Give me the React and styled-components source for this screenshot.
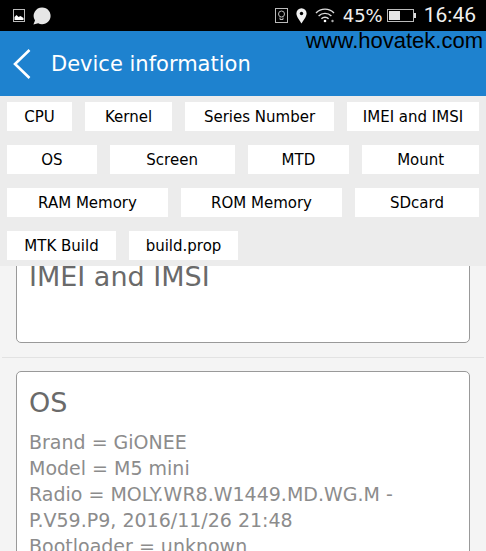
import React from "react";
import styled, { createGlobalStyle } from "styled-components";

const SECTION_ROWS = [
  {
    columns: "65fr 87fr 149fr 132fr",
    items: ["CPU", "Kernel", "Series Number", "IMEI and IMSI"],
  },
  {
    columns: "90fr 125fr 102fr 117fr",
    items: ["OS", "Screen", "MTD", "Mount"],
  },
  {
    columns: "161fr 161fr 124fr",
    items: ["RAM Memory", "ROM Memory", "SDcard"],
  },
  {
    columns: "109fr 109fr 228fr",
    items: ["MTK Build", "build.prop"],
  },
];

const OS_DETAILS = [
  "Brand = GiONEE",
  "Model = M5 mini",
  "Radio = MOLY.WR8.W1449.MD.WG.M - P.V59.P9, 2016/11/26 21:48",
  "Bootloader = unknown",
];

const App = () => {
  return (
    <>
      <GlobalStyle />
      <Screen>
        <StatusBar />
        <TitleBar>
          <BackButton type="button" aria-label="Back">
            <svg width="18" height="32" viewBox="0 0 18 32" fill="none">
              <path d="M16.5 2 L2 16 L16.5 30" stroke="#fff" strokeWidth="2.6" />
            </svg>
          </BackButton>
          <Title>Device information</Title>
          <SiteMark>www.hovatek.com</SiteMark>
        </TitleBar>
        <Sections>
          {SECTION_ROWS.map((row) => (
            <SectionRow key={row.columns} $columns={row.columns}>
              {row.items.map((item) => (
                <SectionButton key={item} type="button">
                  {item}
                </SectionButton>
              ))}
            </SectionRow>
          ))}
        </Sections>
        <Content>
          <CardList>
            <Card>
              <CardTitle>IMEI and IMSI</CardTitle>
            </Card>
            <Divider />
            <Card>
              <CardTitle>OS</CardTitle>
              {OS_DETAILS.map((line) => (
                <Detail key={line}>{line}</Detail>
              ))}
            </Card>
          </CardList>
        </Content>
      </Screen>
    </>
  );
};

const StatusBar = () => {
  return (
    <StatusWrapper>
      <StatusGroup>
        <svg width="12" height="13" viewBox="0 0 12 13">
          <rect x="0.5" y="0.5" width="11" height="12" fill="none" stroke="#bbb" />
          <path d="M1.5 11V8l2-2 2 2 2-1 3 2v2z" fill="#fff" />
        </svg>
        <svg width="18" height="18" viewBox="0 0 18 18">
          <path
            d="M9.2 0.5a8.4 8.4 0 1 1-4 15.8L0.4 17.6 2 13.4A8.4 8.4 0 0 1 9.2 0.5z"
            fill="#e6e6e6"
          />
        </svg>
      </StatusGroup>
      <StatusGroup>
        <svg width="13" height="15" viewBox="0 0 13 15" fill="none" stroke="#bbb">
          <rect x="0.5" y="0.5" width="12" height="14" />
          <circle cx="6.5" cy="6" r="3" />
          <path d="M5 9.5v2h3v-2" />
        </svg>
        <svg width="11" height="16" viewBox="0 0 11 16">
          <path
            d="M5.5 0.3a5.1 5.1 0 0 1 5.1 5.2c0 3.5-3.6 7-5.1 10.1C4 12.5 0.4 9 0.4 5.5A5.1 5.1 0 0 1 5.5 0.3z"
            fill="#f2f2f2"
          />
          <circle cx="5.5" cy="5.5" r="1.7" fill="#000" />
        </svg>
        <svg width="20" height="15" viewBox="0 0 20 15" fill="none" stroke="#ddd">
          <path d="M1 5a12.5 12.5 0 0 1 18 0" strokeWidth="1.4" />
          <path d="M3.6 8a9 9 0 0 1 12.8 0" strokeWidth="1.4" />
          <path d="M6.4 10.8a5 5 0 0 1 7.2 0" strokeWidth="1.4" />
          <circle cx="10" cy="13" r="1.3" fill="#fff" stroke="none" />
          <circle cx="17.5" cy="13" r="1.2" fill="#aaa" stroke="none" />
        </svg>
        <Battery>
          <Percent>45%</Percent>
          <svg width="29" height="13" viewBox="0 0 29 13">
            <rect x="0.5" y="0.5" width="26" height="12" fill="none" stroke="#bbb" />
            <rect x="2" y="2" width="11" height="9" fill="#e6e6e6" />
            <rect x="27" y="4" width="2" height="5" fill="#ddd" />
          </svg>
        </Battery>
        <Clock>16:46</Clock>
      </StatusGroup>
    </StatusWrapper>
  );
};

const GlobalStyle = createGlobalStyle`
  *, *::before, *::after {
    box-sizing: border-box;
  }

  body {
    margin: 0;
    font-family: "DejaVu Sans", sans-serif;
  }

  svg {
    display: block;
    flex: none;
  }
`;

const Screen = styled.div`
  display: flex;
  flex-direction: column;
  height: 100vh;
  background: #f4f4f4;
`;

const StatusWrapper = styled.div`
  display: flex;
  justify-content: space-between;
  flex: none;
  height: 31px;
  padding: 0 10px 0 13px;
  background: #000;
  color: #f0f0f0;
`;

const StatusGroup = styled.div`
  display: flex;
  align-items: center;
  gap: 8px;
`;

const Battery = styled.div`
  display: flex;
  align-items: center;
  gap: 4px;
`;

const Percent = styled.span`
  font-size: 18px;
`;

const Clock = styled.time`
  font: 400 21px/31px Roboto, sans-serif;
`;

const TitleBar = styled.header`
  position: relative;
  display: flex;
  align-items: center;
  flex: none;
  gap: 20px;
  height: 65px;
  padding: 0 13px;
  background: #1e82cf;
`;

const BackButton = styled.button`
  padding: 0;
  border: 0;
  background: none;
  cursor: pointer;
`;

const Title = styled.h1`
  margin: 0;
  font-size: 21px;
  font-weight: 400;
  color: #fff;
  white-space: nowrap;
`;

const SiteMark = styled.span`
  position: absolute;
  top: 0;
  right: 3px;
  font: 400 22px/20px "Liberation Sans", Arial, sans-serif;
  color: #000;
`;

const Sections = styled.nav`
  display: grid;
  flex: none;
  gap: 14px;
  padding: 6px 7px;
  background: #ececec;
`;

const SectionRow = styled.div`
  display: grid;
  grid-template-columns: ${(p) => p.$columns};
  gap: 13px;
`;

const SectionButton = styled.button`
  height: 29px;
  min-width: 0;
  padding: 0;
  border: 0;
  background: #fff;
  font: inherit;
  font-size: 15px;
  color: #000;
  white-space: nowrap;
  cursor: pointer;
`;

const Content = styled.main`
  flex: 1;
  min-height: 0;
  overflow: hidden;
`;

/* Scrolled so that the first card starts under the section buttons */
const CardList = styled.div`
  margin-top: -21px;
`;

const Card = styled.section`
  min-height: 98px;
  margin: 0 16px;
  padding: 12px;
  border: 1px solid #999;
  border-radius: 5px;
  background: #fff;
`;

const Divider = styled.hr`
  height: 1px;
  margin: 14px 2px 13px;
  border: 0;
  background: #e2e2e2;
`;

const CardTitle = styled.h2`
  margin: 0 0 7px;
  font-size: 27px;
  line-height: 38px;
  font-weight: 400;
  color: #6a6a6a;
`;

const Detail = styled.p`
  margin: 0;
  font-size: 19px;
  line-height: 26px;
  color: #8c8c8c;
`;

export default App;
